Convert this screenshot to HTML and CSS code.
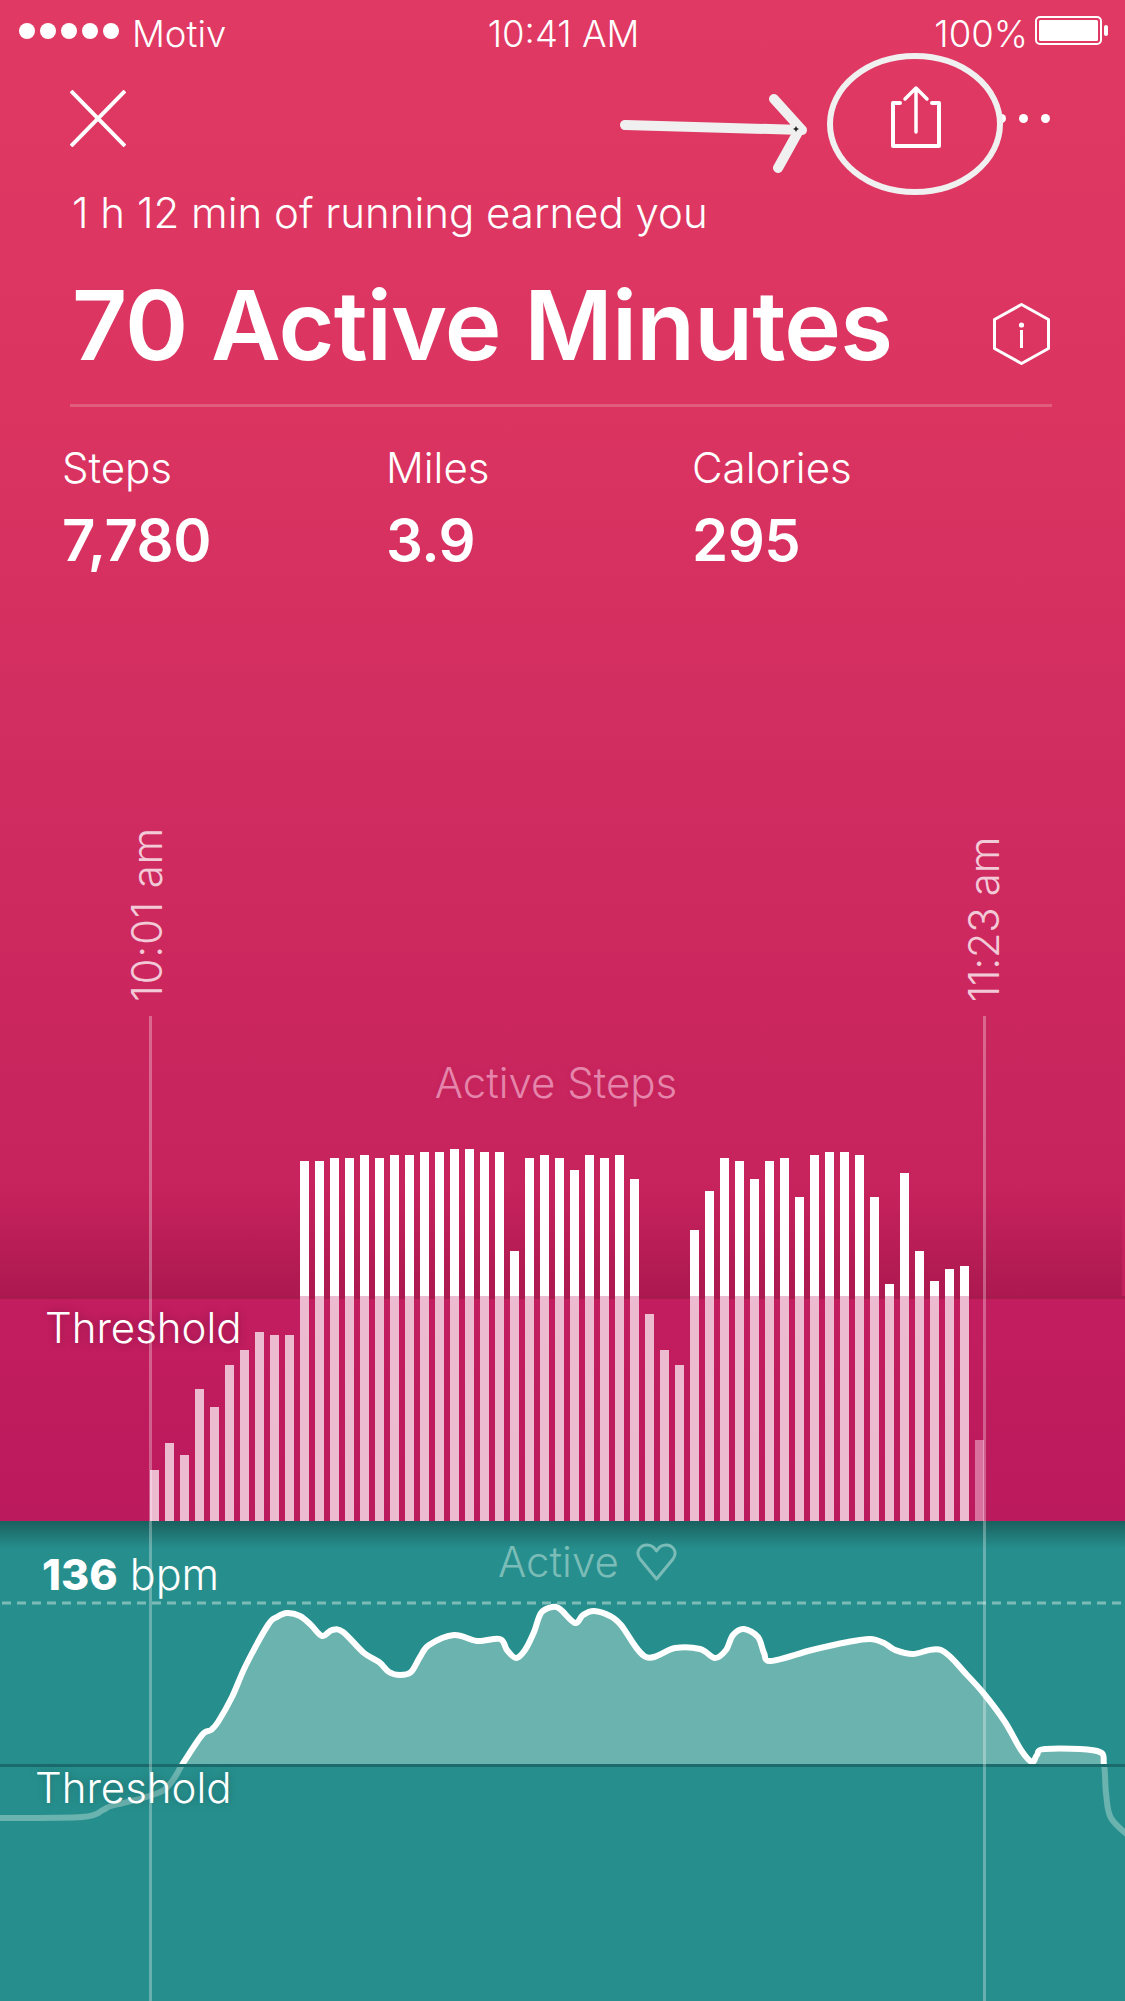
FILE: index.html
```html
<!DOCTYPE html>
<html lang="en">

<head>
    <meta charset="UTF-8">
    <meta name="viewport" content="width=device-width, initial-scale=1.0">
    <title>Activity summary</title>
    <link rel="stylesheet" href="styles.css">
</head>

<body>
    <div class="phone">
        <div class="status-bar">
            <div class="carrier">
                <span class="signal"><i></i><i></i><i></i><i></i><i></i></span>
                <span>Motiv</span>
            </div>
            <div class="clock">10:41 AM</div>
            <div class="power">
                <span>100%</span>
                <svg class="battery" width="73" height="30" viewBox="0 0 73 30">
                    <rect x="1" y="1" width="65" height="27" rx="4" fill="none" stroke="#fff" stroke-width="2" />
                    <rect x="4" y="4" width="59" height="21" rx="1.5" fill="#fff" />
                    <rect x="69" y="9" width="4" height="11" rx="2" fill="#fff" />
                </svg>
            </div>
        </div>

        <div class="toolbar">
            <svg width="56" height="57" viewBox="0 0 56 57">
                <path d="M1 1 L55 56 M55 1 L1 56" stroke="#fff" stroke-width="4" fill="none" />
            </svg>
            <div class="toolbar-actions">
                <svg width="52" height="66" viewBox="0 0 52 66">
                    <path d="M10 18 H3 V61 H49 V18 H42" fill="none" stroke="#fff" stroke-width="4" stroke-linejoin="round" stroke-linecap="round" />
                    <path d="M26 47 V3 M15 14 L26 3 L37 14" fill="none" stroke="#fff" stroke-width="3.5" stroke-linecap="round" stroke-linejoin="round" />
                </svg>
                <div class="more"><i></i><i></i><i></i></div>
            </div>
        </div>

        <p class="earned">1 h 12 min of running earned you</p>
        <div class="headline">
            <h1>70 Active Minutes</h1>
            <svg class="info" width="57" height="62" viewBox="0 0 57 62">
                <path d="M28.5 1.5 L55.5 16.5 V45.5 L28.5 60.5 L1.5 45.5 V16.5 Z" fill="none" stroke="#fff" stroke-width="3" stroke-linejoin="round" />
                <circle cx="28.5" cy="22" r="2.6" fill="#fff" />
                <path d="M28.5 27 V45" stroke="#fff" stroke-width="3" />
            </svg>
        </div>
        <div class="divider"></div>

        <div class="stats">
            <div class="stat stat-steps">
                <div class="stat-label">Steps</div>
                <div class="stat-value">7,780</div>
            </div>
            <div class="stat stat-miles">
                <div class="stat-label">Miles</div>
                <div class="stat-value">3.9</div>
            </div>
            <div class="stat">
                <div class="stat-label">Calories</div>
                <div class="stat-value">295</div>
            </div>
        </div>

        <div class="steps-chart">
            <div class="chart-title">Active Steps</div>
            <div class="threshold-shade"></div>
            <div class="threshold-zone"></div>
            <div class="threshold-label steps-threshold">Threshold</div>
            <div id="bars" class="bars"></div>
        </div>

        <div class="heart-chart">
            <svg class="heart-graph" viewBox="0 1521 1125 480">
                <defs>
                    <clipPath id="above"><rect x="0" y="1521" width="1125" height="244" /></clipPath>
                    <clipPath id="below"><rect x="0" y="1765" width="1125" height="236" /></clipPath>
                </defs>
                <path id="hr-fill" class="hr-fill" clip-path="url(#above)" />
                <path id="hr-low" class="hr-low" clip-path="url(#below)" />
                <path id="hr-high" class="hr-high" clip-path="url(#above)" />
                <line class="hr-dash" x1="2" y1="1603" x2="1125" y2="1603" />
                <line class="hr-threshold" x1="0" y1="1765.5" x2="1125" y2="1765.5" />
            </svg>
            <div class="bpm"><b>136</b> bpm</div>
            <div class="zone-name">
                <span>Active</span>
                <svg width="41" height="38" viewBox="0 0 41 38">
                    <path d="M20.5 36 L4 16 C-1 9 4 2 11 2 C15.5 2 18.5 4.5 20.5 8 C22.5 4.5 25.500 2 30 2 C37 2 42 9 37 16 Z" fill="none" stroke="#7cbcb8" stroke-width="3" stroke-linejoin="round" />
                </svg>
            </div>
            <div class="threshold-label heart-threshold">Threshold</div>
        </div>

        <div class="marker marker-start">
            <span class="marker-time">10:01 am</span>
            <div class="marker-line"></div>
        </div>
        <div class="marker marker-end">
            <span class="marker-time">11:23 am</span>
            <div class="marker-line"></div>
        </div>

        <!-- hand drawn annotation on top of the screenshot -->
        <svg class="annotation" width="1125" height="220" viewBox="0 0 1125 220">
            <ellipse cx="915" cy="124" rx="85" ry="68" fill="none" stroke="#f0f0f0" stroke-width="6" />
            <path d="M625 125 L802 130 M774 99 L802 130 M778 168 L798 132" fill="none" stroke="#f0f0f0" stroke-width="10" stroke-linecap="round" />
            <path d="M796 126 l1 2 l2 1 l-2 1 l-1 2 l-1 -2 l-2 -1 l2 -1 Z" fill="#222" />
        </svg>
    </div>
    <script src="chart.js"></script>
</body>

</html>
```

FILE: styles.css
```css
* {
    box-sizing: border-box;
}

body {
    margin: 0;
    font-family: Inter, "Liberation Sans", sans-serif;
    color: #fff;
}

.phone {
    position: relative;
    width: 1125px;
    height: 2001px;
    overflow: hidden;
    display: flex;
    flex-direction: column;
    background: linear-gradient(180deg, #e03963 0%, #db3461 20%, #cf2b60 42%, #c5215c 62%, #c01e5c 66%);
}

.status-bar {
    height: 62px;
    padding: 6px 17px 0 19px;
    display: grid;
    grid-template-columns: 1fr auto 1fr;
    align-items: center;
    font-size: 36.500px;
    font-weight: 300;
}

.carrier {
    display: flex;
    align-items: center;
    gap: 13px;
}

.signal {
    display: flex;
    gap: 5px;
    margin-bottom: 6px;
}

.signal i {
    width: 16px;
    height: 16px;
    border-radius: 50%;
    background: #fff;
}

.power {
    display: flex;
    justify-content: flex-end;
    align-items: center;
    gap: 7px;
}

.battery {
    margin-bottom: 6px;
}

.toolbar {
    height: 129px;
    padding: 0 75px 17px 70px;
    display: flex;
    justify-content: space-between;
    align-items: center;
}

.toolbar-actions {
    display: flex;
    align-items: center;
    gap: 55px;
}

.more {
    display: flex;
    gap: 13px;
}

.more i {
    width: 9px;
    height: 9px;
    border-radius: 50%;
    background: #fff;
}

.earned {
    margin: 0 0 0 72px;
    font-size: 42px;
    font-weight: 300;
    line-height: 44px;
}

.headline {
    margin-top: 32px;
    padding: 0 75px 0 72px;
    display: flex;
    justify-content: space-between;
    align-items: center;
}

.headline h1 {
    margin: 0;
    font-size: 96px;
    font-weight: 600;
    line-height: 116px;
    letter-spacing: -0.8px;
}

.info {
    margin-top: 18px;
}

.divider {
    height: 3px;
    margin: 21px 73px 0 70px;
    background: rgba(255, 255, 255, 0.2);
}

.stats {
    margin-top: 39px;
    padding-left: 62px;
    display: flex;
}

.stat-steps {
    width: 324px;
}

.stat-miles {
    width: 306px;
}

.stat-label {
    font-size: 42px;
    font-weight: 300;
    line-height: 44px;
}

.stat-value {
    margin-top: 14px;
    font-size: 58px;
    font-weight: 600;
    line-height: 72px;
    letter-spacing: -0.5px;
}

.steps-chart {
    position: relative;
    flex: 1;
    display: flex;
    flex-direction: column;
    justify-content: flex-end;
}

.chart-title {
    position: absolute;
    top: 485px;
    left: 0;
    width: 1112px;
    text-align: center;
    font-size: 42px;
    font-weight: 300;
    line-height: 44px;
    color: #e585ab;
    text-shadow: 0 0 8px rgba(0, 0, 0, 0.06);
}

.threshold-shade {
    position: absolute;
    left: 0;
    bottom: 222px;
    width: 1122px;
    height: 110px;
    background: linear-gradient(180deg, rgba(120, 10, 50, 0) 0%, rgba(120, 10, 50, 0.3) 100%);
}

.threshold-zone {
    position: absolute;
    left: 0;
    right: 0;
    bottom: 0;
    height: 225px;
    border-top: 3px solid #a61a4e;
    background: linear-gradient(180deg, #c21d5f 0%, #bb1a5c 100%);
}

.threshold-label {
    position: absolute;
    font-size: 42px;
    font-weight: 300;
    line-height: 48px;
    text-shadow: 0 0 8px rgba(0, 0, 0, 0.25);
}

.steps-threshold {
    left: 45px;
    bottom: 169px;
}

.bars {
    position: relative;
    padding-left: 150px;
    display: flex;
    align-items: flex-end;
    gap: 6px;
}

.bar {
    width: 9px;
    background: linear-gradient(0deg, #ecbbd0 225px, #fff 225px);
}

.bar-faded {
    background: #d9709d;
}

.heart-chart {
    position: relative;
    height: 480px;
    background: #268f8d;
}

.heart-chart::before {
    content: "";
    position: absolute;
    left: 0;
    right: 0;
    top: 0;
    height: 28px;
    background: linear-gradient(180deg, rgba(0, 0, 0, 0.33) 0%, rgba(0, 0, 0, 0) 100%);
}

.heart-graph {
    position: absolute;
    left: 0;
    top: 0;
    width: 1125px;
    height: 480px;
}

.hr-fill {
    fill: #6ab3af;
}

.hr-high,
.hr-low {
    fill: none;
    stroke-width: 6;
    stroke-linejoin: round;
}

.hr-high {
    stroke: #fff;
}

.hr-low {
    stroke: #6ab3af;
}

.hr-dash {
    stroke: #7cbcb8;
    stroke-width: 3;
    stroke-dasharray: 9 6;
}

.hr-threshold {
    stroke: #1c6b6c;
    stroke-width: 3;
}

.bpm {
    position: absolute;
    left: 42px;
    top: 29px;
    font-size: 43px;
    font-weight: 300;
    line-height: 48px;
}

.bpm b {
    font-weight: 800;
}

.zone-name {
    position: absolute;
    left: 498px;
    top: 19px;
    display: flex;
    align-items: center;
    gap: 17px;
    font-size: 42px;
    font-weight: 300;
    line-height: 44px;
    color: #7cbcb8;
}

.heart-threshold {
    left: 35px;
    top: 243px;
}

.marker {
    position: absolute;
    bottom: 0;
    width: 40px;
    display: flex;
    flex-direction: column;
    align-items: center;
    gap: 14px;
}

.marker-start {
    left: 130px;
}

.marker-end {
    left: 964px;
}

.marker-time {
    writing-mode: vertical-rl;
    transform: rotate(180deg);
    font-size: 42px;
    font-weight: 300;
    line-height: 40px;
    white-space: nowrap;
    color: rgba(255, 255, 255, 0.75);
}

.marker-start .marker-time {
    transform: translateX(-3px) rotate(180deg);
    letter-spacing: 0.8px;
}

.marker-end .marker-time {
    letter-spacing: -0.3px;
}

.marker-line {
    width: 3px;
    height: 985px;
    background: rgba(255, 255, 255, 0.3);
}

.annotation {
    position: absolute;
    left: 0;
    top: 0;
}
```

FILE: chart.js
```js
// Active step bars, heights in px per minute
const stepHeights = [
    51, 78, 66, 132, 114, 156, 171, 189, 186, 186,
    360, 360, 363, 363, 366, 363, 366, 366, 369, 369,
    372, 372, 369, 369, 270, 363, 366, 363, 351, 366,
    363, 366, 342, 207, 171, 156, 291, 330, 363, 360,
    342, 360, 363, 324, 366, 369, 369, 366, 324, 237,
    348, 270, 240, 252, 255, 81,
];

const bars = document.getElementById('bars');
stepHeights.forEach((height, i) => {
    const bar = document.createElement('div');
    bar.className = i === stepHeights.length - 1 ? 'bar bar-faded' : 'bar';
    bar.style.height = height + 'px';
    bars.appendChild(bar);
});

// Heart rate curve, in page coordinates
const heartRate = [
    [-6, 1818], [82, 1817], [103, 1810], [111, 1806], [143, 1798], [164, 1790], [175, 1777], [182, 1765],
    [202, 1735], [211, 1730], [218, 1722], [232, 1697], [246, 1665], [268, 1625], [277, 1617], [287, 1613],
    [300, 1616], [311, 1625], [322, 1636], [332, 1630], [343, 1632], [364, 1653], [379, 1662], [389, 1672],
    [400, 1675], [411, 1672], [420, 1657], [429, 1645], [454, 1635], [477, 1641], [500, 1639], [507, 1650],
    [516, 1658], [525, 1650], [534, 1632], [541, 1613], [552, 1607], [560, 1609], [575, 1623], [583, 1615],
    [594, 1611], [610, 1616], [621, 1625], [646, 1657], [675, 1648], [700, 1649], [715, 1658], [726, 1650],
    [733, 1635], [744, 1629], [758, 1637], [764, 1653], [771, 1661], [812, 1650], [848, 1642], [870, 1639],
    [884, 1643], [895, 1650], [913, 1654], [941, 1650], [967, 1675], [985, 1695], [1005, 1722], [1021, 1750],
    [1032, 1762], [1037, 1755], [1045, 1749], [1097, 1751], [1104, 1765], [1106, 1793], [1111, 1818], [1131, 1838],
];

// Catmull-Rom to bezier so the line comes out smooth
function smoothPath(points) {
    let d = `M${points[0][0]} ${points[0][1]}`;
    for (let i = 0; i < points.length - 1; i++) {
        const p0 = points[i - 1] || points[i];
        const p1 = points[i];
        const p2 = points[i + 1];
        const p3 = points[i + 2] || p2;
        const c1x = p1[0] + (p2[0] - p0[0]) / 6;
        const c1y = p1[1] + (p2[1] - p0[1]) / 6;
        const c2x = p2[0] - (p3[0] - p1[0]) / 6;
        const c2y = p2[1] - (p3[1] - p1[1]) / 6;
        d += ` C${c1x} ${c1y} ${c2x} ${c2y} ${p2[0]} ${p2[1]}`;
    }
    return d;
}

const line = smoothPath(heartRate);
document.getElementById('hr-high').setAttribute('d', line);
document.getElementById('hr-low').setAttribute('d', line);
document.getElementById('hr-fill').setAttribute('d', line);
```
